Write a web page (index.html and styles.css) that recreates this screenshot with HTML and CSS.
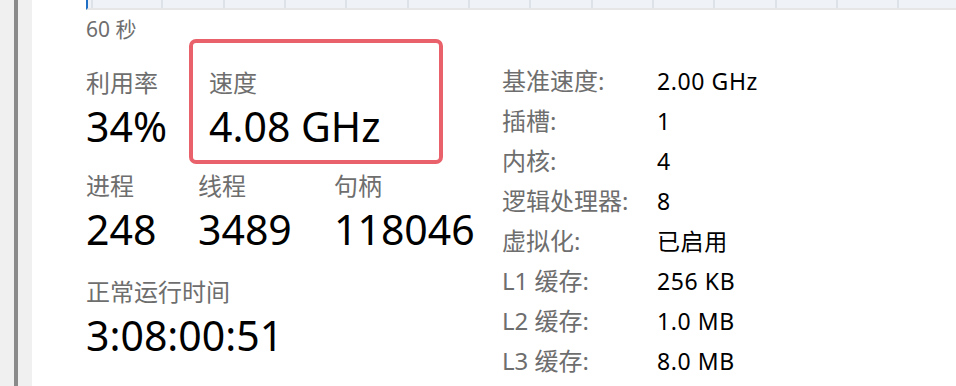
FILE: index.html
```html
<!DOCTYPE html>
<html lang="zh-CN">
<head>
    <meta charset="UTF-8">
    <meta name="viewport" content="width=device-width, initial-scale=1.0">
    <title>CPU 性能</title>
    <link rel="stylesheet" href="styles.css">
</head>
<body>
    <div class="window">
        <div class="rail"></div>
        <main class="panel">
            <div class="graph"></div>
            <div class="axis">60 秒</div>

            <section class="stats">
                <div class="perf">
                    <div class="row">
                        <div class="stat util">
                            <div class="label">利用率</div>
                            <div class="value">34%</div>
                        </div>
                        <div class="stat speed">
                            <div class="label">速度</div>
                            <div class="value">4.08 GHz</div>
                        </div>
                    </div>
                    <div class="row counts">
                        <div class="stat procs">
                            <div class="label">进程</div>
                            <div class="value">248</div>
                        </div>
                        <div class="stat threads">
                            <div class="label">线程</div>
                            <div class="value">3489</div>
                        </div>
                        <div class="stat">
                            <div class="label">句柄</div>
                            <div class="value">118046</div>
                        </div>
                    </div>
                    <div class="row uptime">
                        <div class="stat">
                            <div class="label">正常运行时间</div>
                            <div class="value">3:08:00:51</div>
                        </div>
                    </div>
                </div>

                <dl class="specs">
                    <dt>基准速度:</dt><dd>2.00 GHz</dd>
                    <dt>插槽:</dt><dd>1</dd>
                    <dt>内核:</dt><dd>4</dd>
                    <dt>逻辑处理器:</dt><dd>8</dd>
                    <dt>虚拟化:</dt><dd>已启用</dd>
                    <dt>L1 缓存:</dt><dd>256 KB</dd>
                    <dt>L2 缓存:</dt><dd>1.0 MB</dd>
                    <dt>L3 缓存:</dt><dd>8.0 MB</dd>
                </dl>
            </section>
        </main>
    </div>
</body>
</html>
```

FILE: styles.css
```css
html, body { margin: 0; height: 100%; overflow: hidden; background: #fff; }
body { font-family: "Noto Sans", "Noto Sans CJK SC", sans-serif; color: #000; }

.window { display: flex; height: 386px; }
.rail { width: 4px; border-left: 14px solid #f0f0f0; border-right: 14px solid #f0f0f0; background: #8a8a8a; flex-shrink: 0; }
.panel { flex: 1; padding-left: 54px; }

/* strip of the usage graph at the top */
.graph {
    height: 8px;
    border-left: 2px solid #1f6fc5;
    border-bottom: 2px solid #e6e6e6;
    background-color: #eff3f8;
    background-image: repeating-linear-gradient(to right, transparent 0 59.33px, #dde2e8 59.33px 61.33px);
    background-position: 14px 0;
}
.axis { margin-top: 9px; font-size: 21px; line-height: 20px; color: #6e6e6e; }

.stats { display: flex; }
.perf { width: 416px; flex-shrink: 0; }
.row { display: flex; align-items: flex-start; }

.label { font-size: 24px; line-height: 30px; color: #6e6e6e; margin-bottom: 3px; white-space: nowrap; }
.value { font-size: 41px; line-height: 50px; white-space: nowrap; }

.util { width: 103px; padding-top: 29px; }
.speed {
    width: 214px;
    padding: 25px 16px 9px;
    border: 4px solid #e9616a;
    border-radius: 7px;
}

.counts { margin-top: 7px; }
.procs { width: 112px; }
.threads { width: 136px; }
.uptime { margin-top: 23px; }

.specs {
    display: grid;
    grid-template-columns: 155px auto;
    margin: 0;
    padding-top: 22px;
    line-height: 40px;
}
.specs dt { font-size: 24px; color: #6e6e6e; white-space: nowrap; }
.specs dd { margin: 0; font-size: 23px; letter-spacing: 0.6px; }
```
